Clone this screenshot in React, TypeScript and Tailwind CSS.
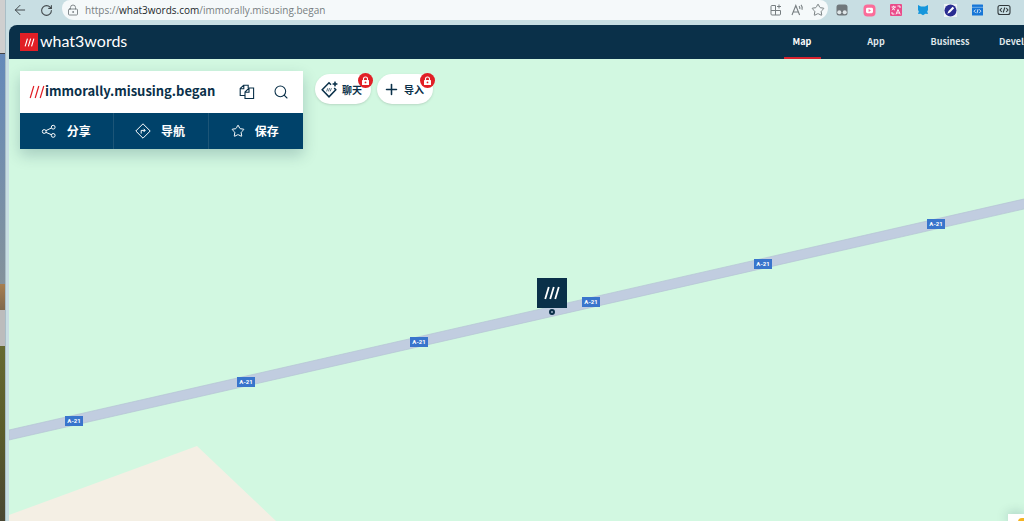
import { ReactNode } from "react";
import { ArrowLeft, LockKeyhole, Plus, RotateCw, Search, Star } from "lucide-react";

const roadSigns = [
  { left: 56, top: 357 },
  { left: 228, top: 318 },
  { left: 401, top: 278 },
  { left: 573, top: 238 },
  { left: 745, top: 200 },
  { left: 918, top: 160 },
];

const navItems = [
  { label: "Map", active: true },
  { label: "App" },
  { label: "Business" },
  { label: "Developers" },
];

function Slashes({ className }: { className?: string }) {
  return (
    <svg viewBox="0 0 16 14" className={className} fill="none" stroke="currentColor" strokeWidth="1.8">
      <path d="M1.2 13 4.8 1M6.2 13 9.8 1M11.2 13 14.8 1" />
    </svg>
  );
}

function CopyIcon() {
  return (
    <svg width="16" height="16" viewBox="0 0 16 16" fill="none" stroke="currentColor" strokeWidth="1.1">
      <path d="M6 11.5H1.2V4.6L4.6 1.2H9.2V4M1.2 4.8H4.8V1.2" />
      <path d="M10 4H14.6V14.5H6V8L10 4ZM6 8.2H10V4" />
    </svg>
  );
}

function ShareIcon() {
  return (
    <svg width="16" height="16" viewBox="0 0 16 16" fill="none" stroke="currentColor" strokeWidth="1">
      <circle cx="3.2" cy="8.5" r="1.9" />
      <circle cx="12.2" cy="4.2" r="1.9" />
      <circle cx="12.2" cy="12.4" r="1.9" />
      <path d="M5 7.6 10.4 5M5 9.4l5.4 2.3" />
    </svg>
  );
}

function NavigateIcon() {
  return (
    <svg width="16" height="16" viewBox="0 0 16 16" fill="none" stroke="currentColor" strokeWidth="1">
      <path d="M8 .8 15.2 8 8 15.2.8 8Z" strokeLinejoin="round" />
      <path d="M6.2 10.6V7.4H10M8.6 5.8l1.6 1.6-1.6 1.6" />
    </svg>
  );
}

function ChatIcon() {
  return (
    <svg width="17" height="17" viewBox="0 0 17 17" className="shrink-0" fill="none" stroke="currentColor">
      <path d="M10 3.8 8 1.8 1.2 8.8 8 15.8 14.8 8.8 13.2 7.1" strokeWidth="1.5" />
      <path d="M5.6 10.4l1.2-3.2M7.4 10.4l1.2-3.2M9.2 10.4l1.2-3.2" strokeWidth=".7" />
      <path d="M14 .5l.8 1.7 1.7.8-1.7.8-.8 1.7-.8-1.7-1.7-.8 1.7-.8Z" fill="currentColor" strokeWidth=".6" />
    </svg>
  );
}

function LockBadge() {
  return (
    <span className="absolute -top-px -right-[2px] flex h-[15px] w-[15px] items-center justify-center rounded-full bg-[#e11f26] text-white">
      <svg width="9" height="10" viewBox="0 0 9 10">
        <path d="M2.5 4.5V3a2 2 0 0 1 4 0v1.5" fill="none" stroke="currentColor" strokeWidth="1.1" />
        <rect x="1" y="4" width="7" height="5" rx=".5" fill="currentColor" />
        <circle cx="4.5" cy="6.4" r=".9" fill="#e11f26" />
      </svg>
    </span>
  );
}

function ToolbarButton({ label, children }: { label: string; children: ReactNode }) {
  return (
    <button aria-label={label} className="flex h-4 w-4 shrink-0 items-center justify-center">
      {children}
    </button>
  );
}

function Extensions() {
  return (
    <div className="flex shrink-0 items-center gap-[11px] pr-3 pl-[6px]">
      <ToolbarButton label="Tampermonkey">
        <svg width="12" height="12" viewBox="0 0 12 12">
          <rect x=".5" y=".5" width="11" height="11" rx="2.5" fill="#70777b" />
          <circle cx="3.3" cy="8.2" r="2" fill="#dfe6e8" />
          <circle cx="8.7" cy="8.2" r="2" fill="#dfe6e8" />
        </svg>
      </ToolbarButton>
      <ToolbarButton label="Video">
        <svg width="13" height="13" viewBox="0 0 13 13">
          <rect x=".5" y=".5" width="12" height="12" rx="4" fill="#fb6c99" />
          <rect x="3" y="3.8" width="7" height="5.4" rx="1.4" fill="#fff" />
          <path d="M5.6 5.1 8 6.5 5.6 7.9Z" fill="#fb6c99" />
        </svg>
      </ToolbarButton>
      <ToolbarButton label="Translate">
        <svg width="12" height="12" viewBox="0 0 12 12" fill="none" stroke="#fff">
          <rect width="12" height="12" rx="1" fill="#ea4c8a" stroke="none" />
          <path d="M1.5 3H6M3.7 1.7V3M2 6.2 5 3.2M2.3 3.8 5 6.2M6 10.4 8 5.5l2.2 4.9M6.7 9H9.5M7.5 2H10v2M2 8v2h2.4" strokeWidth=".9" />
        </svg>
      </ToolbarButton>
      <ToolbarButton label="Cat">
        <svg width="12" height="12" viewBox="0 0 12 12">
          <path d="M1 1 4 2.6H8L11 1V6L10.2 7.5 11 10 8.4 9.8 6 11.2 3.6 9.8 1 10 1.8 7.5 1 6Z" fill="#1596dc" />
        </svg>
      </ToolbarButton>
      <ToolbarButton label="Pen">
        <svg width="13" height="13" viewBox="0 0 13 13">
          <rect width="13" height="13" fill="#edf3f5" />
          <circle cx="6.5" cy="6.5" r="6" fill="#292c91" />
          <path d="M3.3 9.7 4.5 7 8.7 2.8l1.5 1.5L6 8.5Z" fill="#fff" />
        </svg>
      </ToolbarButton>
      <ToolbarButton label="Code snippets">
        <svg width="11" height="12" viewBox="0 0 11 12">
          <rect y=".5" width="11" height="11" rx=".5" fill="#1676d7" />
          <path d="M0 3.3H11" stroke="#9ccaf0" strokeWidth=".7" />
          <path d="M3.7 5.5 2 7.2l1.7 1.7M7.3 5.5 9 7.2 7.3 8.9M6 5.2 5 9.2" fill="none" stroke="#fff" strokeWidth=".8" />
        </svg>
      </ToolbarButton>
      <ToolbarButton label="Developer tools">
        <svg width="14" height="12" viewBox="0 0 14 12" fill="none" stroke="#30383b" strokeWidth="1.1">
          <rect x="1" y="1.5" width="12" height="9" rx="2" />
          <path d="M4.8 4 3 6l1.8 2M9.2 4 11 6 9.2 8M7.8 3.5 6.2 8.5" />
        </svg>
      </ToolbarButton>
    </div>
  );
}

function BrowserBar() {
  return (
    <div className="flex h-[25px] items-start overflow-hidden text-[#42494c]">
      <div className="flex h-5 w-[53px] shrink-0 items-center gap-[10px] pl-[3px]">
        <ToolbarButton label="Back">
          <ArrowLeft size={16} strokeWidth={1.5} />
        </ToolbarButton>
        <ToolbarButton label="Refresh">
          <RotateCw size={13} strokeWidth={2} />
        </ToolbarButton>
      </div>
      <div className="flex h-5 min-w-0 flex-1 items-center rounded-t-lg rounded-b-[12px] bg-[#f5f9fa] pr-[2px] pl-[5px] text-[#777e81]">
        <LockKeyhole size={12} strokeWidth={1.8} className="shrink-0" />
        <p className="min-w-0 flex-1 truncate pl-[6px] font-['Open_Sans',sans-serif] text-[10px] leading-5">
          https://<span className="text-[#22282b]">what3words.com</span>/immorally.misusing.began
        </p>
        <div className="flex gap-[5px]">
          <ToolbarButton label="Add to apps">
            <svg width="12" height="12" viewBox="0 0 12 12" fill="none" stroke="currentColor">
              <path d="M5.5 1.5H2a1 1 0 0 0-1 1V10a1 1 0 0 0 1 1H9.5a1 1 0 0 0 1-1V6.5H1M5.5 1.5V11M9 .5v4M7 2.5h4" />
            </svg>
          </ToolbarButton>
          <ToolbarButton label="Read aloud">
            <svg width="13" height="12" viewBox="0 0 13 12" fill="none" stroke="currentColor" strokeWidth="1.1">
              <path d="M1 11 4.8 1.5 8.6 11M2.3 8H7.3M8 2.2q1.3 1.3.8 3M10 .8q2 2.2 1 5" />
            </svg>
          </ToolbarButton>
          <ToolbarButton label="Favourite">
            <Star size={14} strokeWidth={1.7} />
          </ToolbarButton>
        </div>
      </div>
      <div className="flex h-5 items-center">
        <Extensions />
      </div>
    </div>
  );
}

function SiteHeader() {
  return (
    <header className="flex h-[34px] items-stretch justify-between overflow-hidden rounded-tl-lg bg-[#0a3049] text-white">
      <a href="#" className="flex items-center gap-[2px] pl-[11px]">
        <span className="flex h-[18px] w-[18px] items-center justify-center bg-[#e11f26]">
          <Slashes className="h-[9px] w-[11px]" />
        </span>
        <span className="pb-[2px] font-[Lato,sans-serif] text-base leading-5">what3words</span>
      </a>
      <nav className="-mr-[37px] grid shrink-0 grid-cols-[repeat(4,74px)] justify-items-center text-[9px] leading-[34px] font-bold">
        {navItems.map((item) => (
          <a
            key={item.label}
            href="#"
            className={
              item.active
                ? "h-[34px] w-[37px] border-b-2 border-[#d8232f] text-center"
                : "text-center text-[#dfe6ea]"
            }
          >
            {item.label}
          </a>
        ))}
      </nav>
    </header>
  );
}

function AddressCard() {
  return (
    <section className="w-[283px] shadow-[0_6px_14px_rgba(10,48,73,0.22)]">
      <div className="flex h-[42px] items-center bg-white pr-[14px] pb-px pl-[9px] text-[#0a3049]">
        <Slashes className="h-[14px] w-4 shrink-0 text-[#e11f26] [stroke-width:1.2]" />
        <h1 className="flex-1 pb-px text-[13px] leading-5 font-bold">immorally.misusing.began</h1>
        <div className="flex gap-[18px]">
          <button aria-label="Copy">
            <CopyIcon />
          </button>
          <button aria-label="Search">
            <Search size={16} strokeWidth={1.6} />
          </button>
        </div>
      </div>
      <div className="grid h-9 grid-cols-3 divide-x divide-[#1c5577] bg-[#00426a] text-xs font-bold text-white">
        <button className="flex items-center justify-center gap-[10px] pr-[2px]">
          <ShareIcon />
          分享
        </button>
        <button className="flex items-center justify-center gap-[10px] pr-[2px]">
          <NavigateIcon />
          导航
        </button>
        <button className="flex items-center justify-center gap-[10px] pr-[2px]">
          <Star size={14} strokeWidth={1.7} />
          保存
        </button>
      </div>
    </section>
  );
}

function PillButton({ icon, label }: { icon: ReactNode; label: string }) {
  return (
    <button className="relative flex h-[30px] w-14 items-center gap-1 rounded-full bg-white pl-[6px] text-[10px] font-bold text-[#0a3049] shadow-sm">
      {icon}
      <span className="shrink-0">{label}</span>
      <LockBadge />
    </button>
  );
}

function MapView() {
  return (
    <main className="relative flex-1 overflow-hidden bg-[#d2f8e1]">
      <svg className="absolute inset-0 h-full w-full">
        <path d="M0 456 188 387 267 462V1000H0Z" fill="#f4efe4" />
        <path d="M0 371 1015 140 2030 -91V-81L1015 150 0 381Z" fill="#c1cde0" stroke="#b5c4d4" strokeWidth=".7" />
      </svg>

      {roadSigns.map((sign) => (
        <span
          key={sign.left}
          className="absolute h-[10px] w-[18px] bg-[#3975cc] text-center font-[Roboto,sans-serif] text-[6px] leading-[10px] font-bold text-white"
          style={{ left: sign.left, top: sign.top }}
        >
          A-21
        </span>
      ))}

      {/* Selected square */}
      <div className="absolute top-[219px] left-[528px] flex w-[30px] flex-col items-center gap-px">
        <span className="flex h-[30px] w-[30px] items-center justify-center bg-[#0a3049] text-white">
          <Slashes className="h-[14px] w-4" />
        </span>
        <span className="h-[6px] w-[6px] rounded-full border-2 border-[#0a3049] bg-[#9fb3c8]" />
      </div>

      <div className="relative flex items-start gap-3 pt-3 pl-[11px]">
        <AddressCard />
        <div className="flex gap-[6px] pt-[3px]">
          <PillButton icon={<ChatIcon />} label="聊天" />
          <PillButton icon={<Plus size={17} strokeWidth={2.2} className="shrink-0" />} label="导入" />
        </div>
      </div>

      {/* Map type switcher */}
      <button
        aria-label="Map type"
        className="absolute right-0 bottom-0 flex h-[7px] w-4 items-start justify-end overflow-hidden bg-white pt-1 shadow-[0_0_12px_rgba(10,48,73,0.3)]"
      >
        <span className="h-3 w-[6px] shrink-0 rounded-tl bg-[#f5b321]" />
      </button>
    </main>
  );
}

export default function App() {
  return (
    <div className="flex min-h-screen overflow-hidden bg-[#c8dee3] font-['Noto_Sans_CJK_SC',sans-serif]">
      {/* Desktop behind the window */}
      <div className="flex w-[5px] shrink-0 flex-col">
        <div className="h-[54px] border-b border-[#444] bg-[#cfcfcf]" />
        <div className="h-[230px] bg-linear-to-b from-[#6489ba] to-[#84929b]" />
        <div className="h-[26px] bg-linear-to-b from-[#a77f50] to-[#80694b]" />
        <div className="h-9 bg-[#bcbcbc]" />
        <div className="flex-1 bg-linear-to-b from-[#666a32] via-[#5a5b2a] to-[#4a4633]" />
      </div>
      <div className="flex min-w-0 flex-1 flex-col border-l border-[#a9bec6] pl-[3px]">
        <BrowserBar />
        <SiteHeader />
        <MapView />
      </div>
    </div>
  );
}
